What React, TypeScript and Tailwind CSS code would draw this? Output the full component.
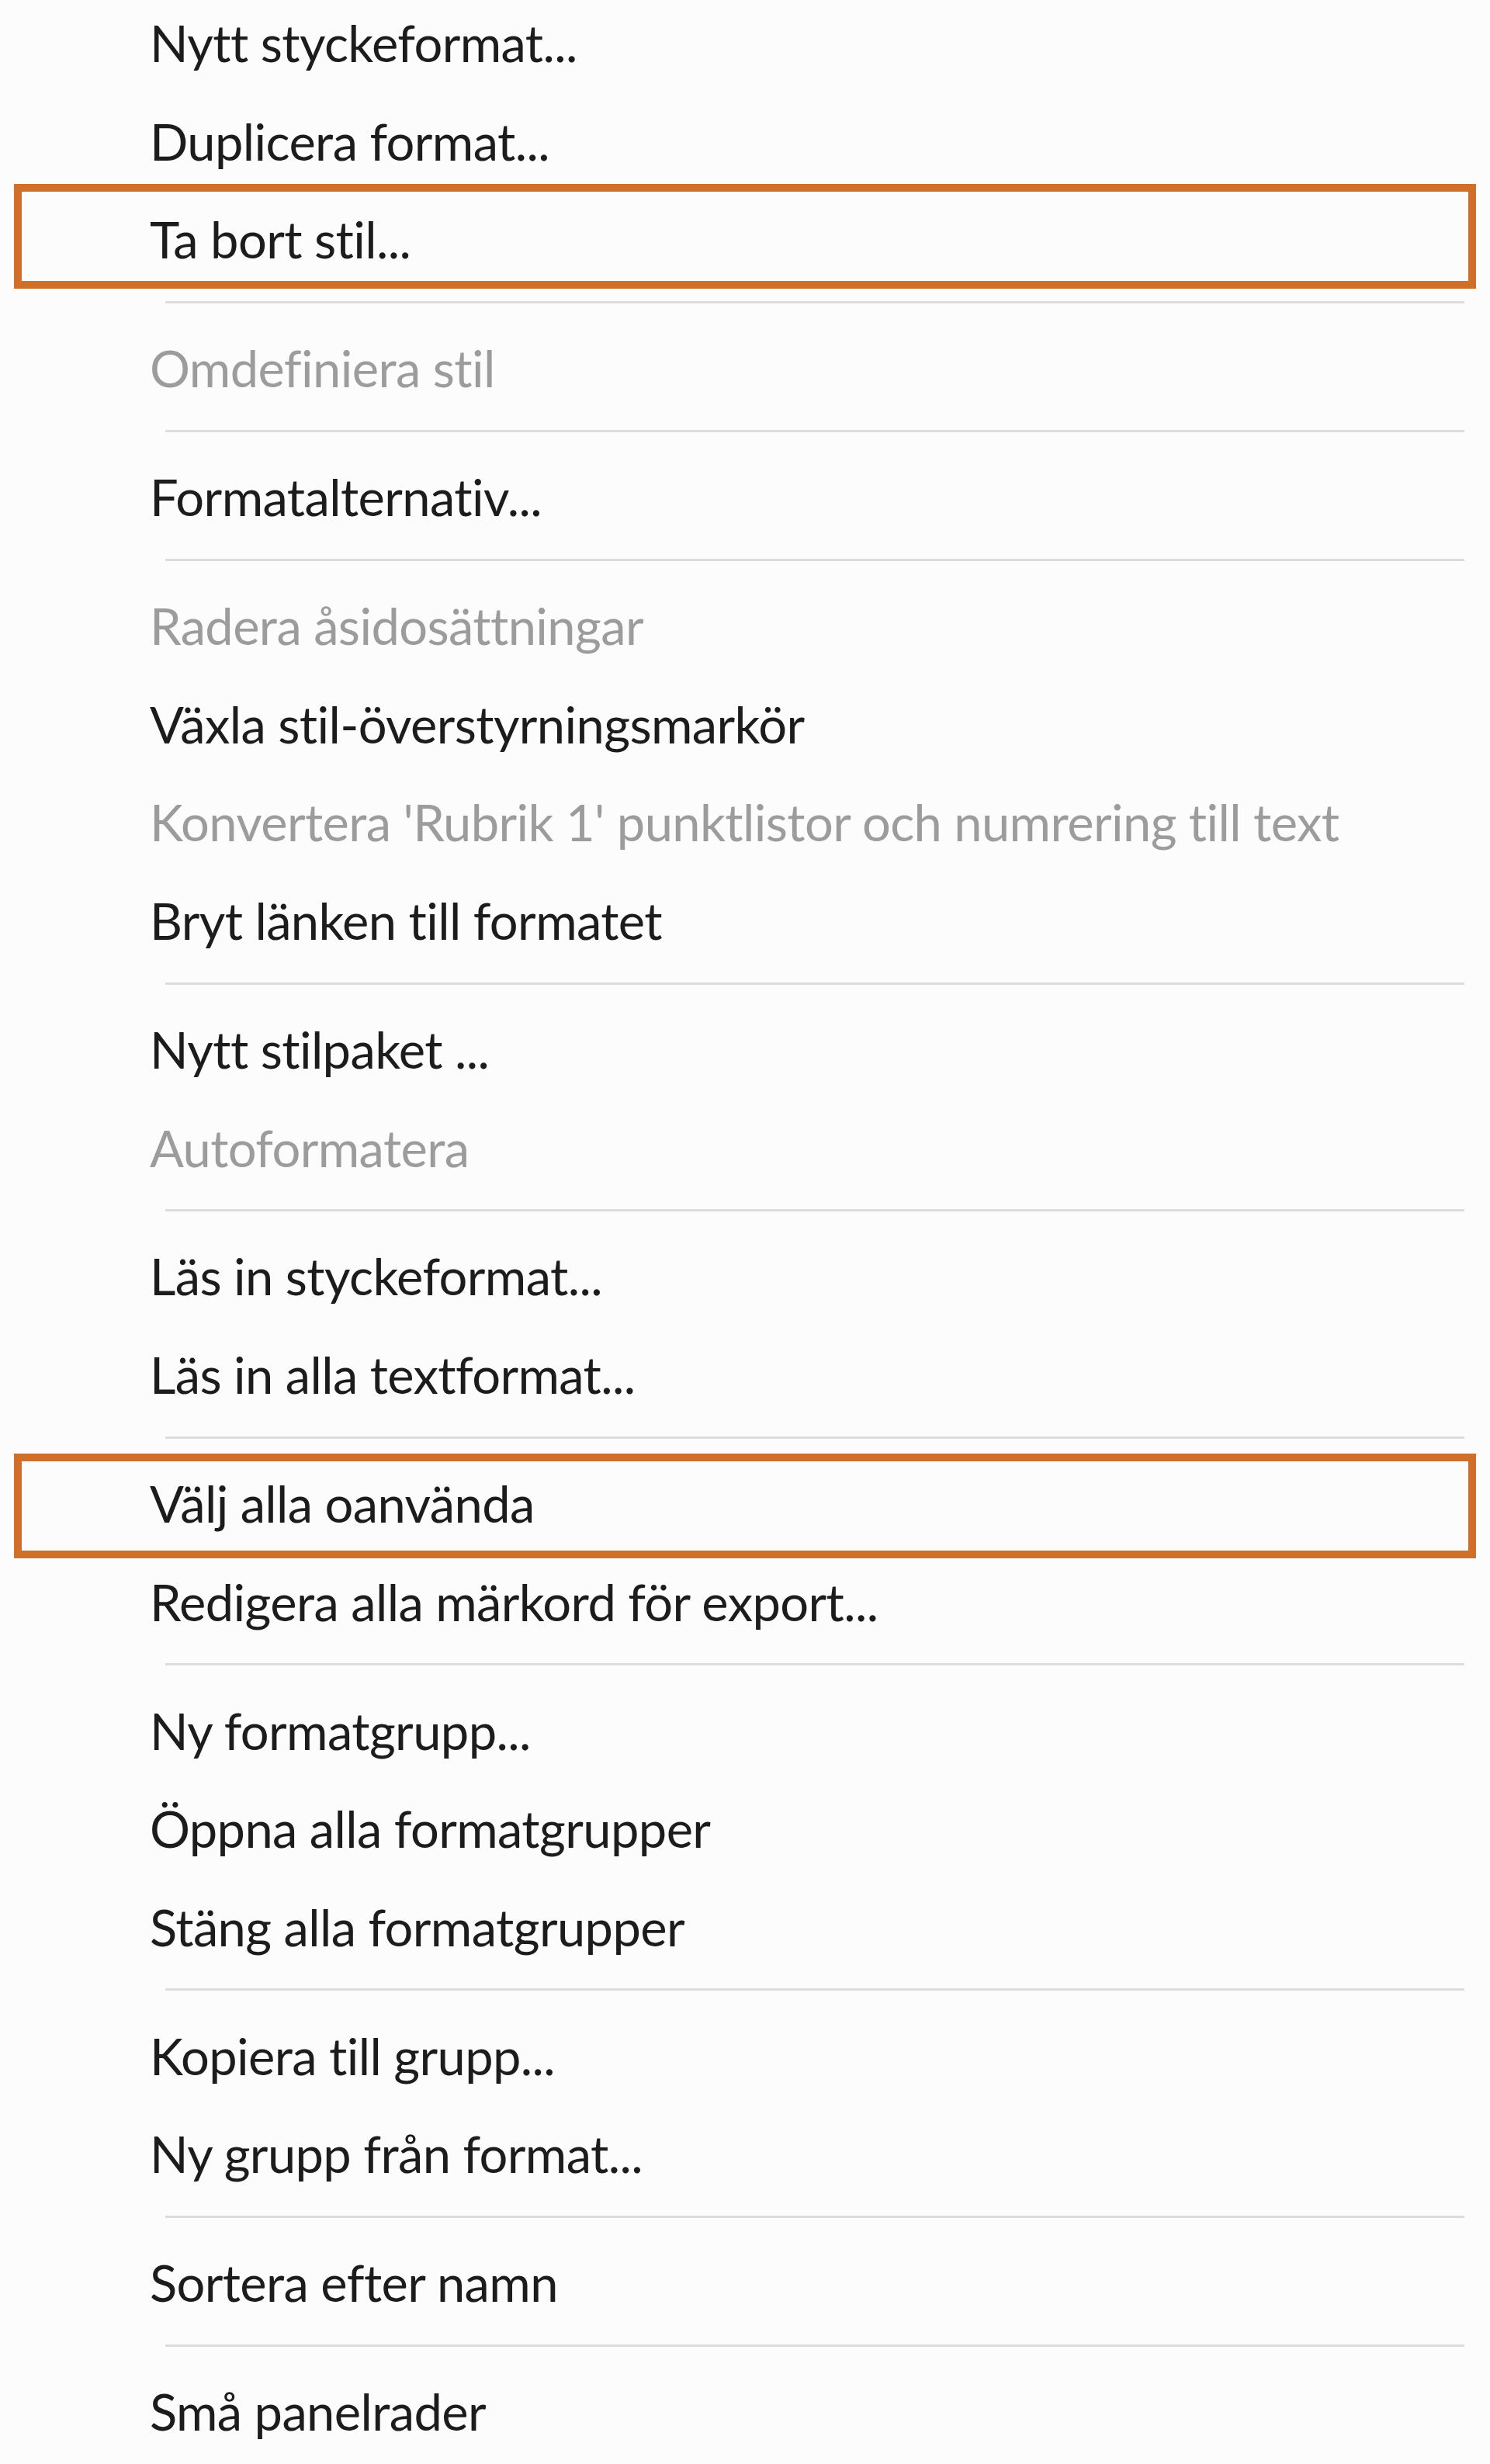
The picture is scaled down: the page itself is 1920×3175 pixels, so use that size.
import React from 'react';

type Entry =
  | { type: 'item'; label: string; disabled?: boolean; boxTop?: number }
  | { type: 'sep' };

// menu entries, in order
const entries: Entry[] = [
  { type: 'item', label: 'Nytt styckeformat...' },
  { type: 'item', label: 'Duplicera format...' },
  { type: 'item', label: 'Ta bort stil...', boxTop: -16 },
  { type: 'sep' },
  { type: 'item', label: 'Omdefiniera stil', disabled: true },
  { type: 'sep' },
  { type: 'item', label: 'Formatalternativ...' },
  { type: 'sep' },
  { type: 'item', label: 'Radera åsidosättningar', disabled: true },
  { type: 'item', label: 'Växla stil-överstyrningsmarkör' },
  { type: 'item', label: "Konvertera 'Rubrik 1' punktlistor och numrering till text", disabled: true },
  { type: 'item', label: 'Bryt länken till formatet' },
  { type: 'sep' },
  { type: 'item', label: 'Nytt stilpaket ...' },
  { type: 'item', label: 'Autoformatera', disabled: true },
  { type: 'sep' },
  { type: 'item', label: 'Läs in styckeformat...' },
  { type: 'item', label: 'Läs in alla textformat...' },
  { type: 'sep' },
  { type: 'item', label: 'Välj alla oanvända', boxTop: -9 },
  { type: 'item', label: 'Redigera alla märkord för export...' },
  { type: 'sep' },
  { type: 'item', label: 'Ny formatgrupp...' },
  { type: 'item', label: 'Öppna alla formatgrupper' },
  { type: 'item', label: 'Stäng alla formatgrupper' },
  { type: 'sep' },
  { type: 'item', label: 'Kopiera till grupp...' },
  { type: 'item', label: 'Ny grupp från format...' },
  { type: 'sep' },
  { type: 'item', label: 'Sortera efter namn' },
  { type: 'sep' },
  { type: 'item', label: 'Små panelrader' },
];

function MenuItem({ label, disabled, boxTop }: { label: string; disabled?: boolean; boxTop?: number }) {
  return (
    <div className="relative h-[126.6px] shrink-0">
      <div
        className={
          'pl-[193px] pt-[10px] text-[65px] leading-[90px] tracking-[-0.6px] whitespace-nowrap [font-variant-ligatures:none] ' +
          (disabled ? 'text-[#9c9c9c]' : 'text-[#1c1c1c]')
        }
      >
        {label}
      </div>
      {boxTop !== undefined && (
        <div
          className="absolute left-[18px] right-[18px] h-[135px] border-[10px] border-[#cf6f2a]"
          style={{ top: boxTop }}
        />
      )}
    </div>
  );
}

function Separator() {
  return (
    <div className="h-[39.4px] shrink-0 pt-[8px]">
      <div className="ml-[213px] mr-[33px] h-[3px] bg-[#dcdcdc]" />
    </div>
  );
}

export default function App() {
  return (
    <div
      className="w-[1920px] h-[3175px] overflow-hidden bg-[#fcfcfc] flex flex-col"
      style={{ fontFamily: 'Lato, "Noto Sans", sans-serif' }}
    >
      {entries.map((e, i) =>
        e.type === 'sep' ? (
          <Separator key={i} />
        ) : (
          <MenuItem key={i} label={e.label} disabled={e.disabled} boxTop={e.boxTop} />
        )
      )}
    </div>
  );
}
